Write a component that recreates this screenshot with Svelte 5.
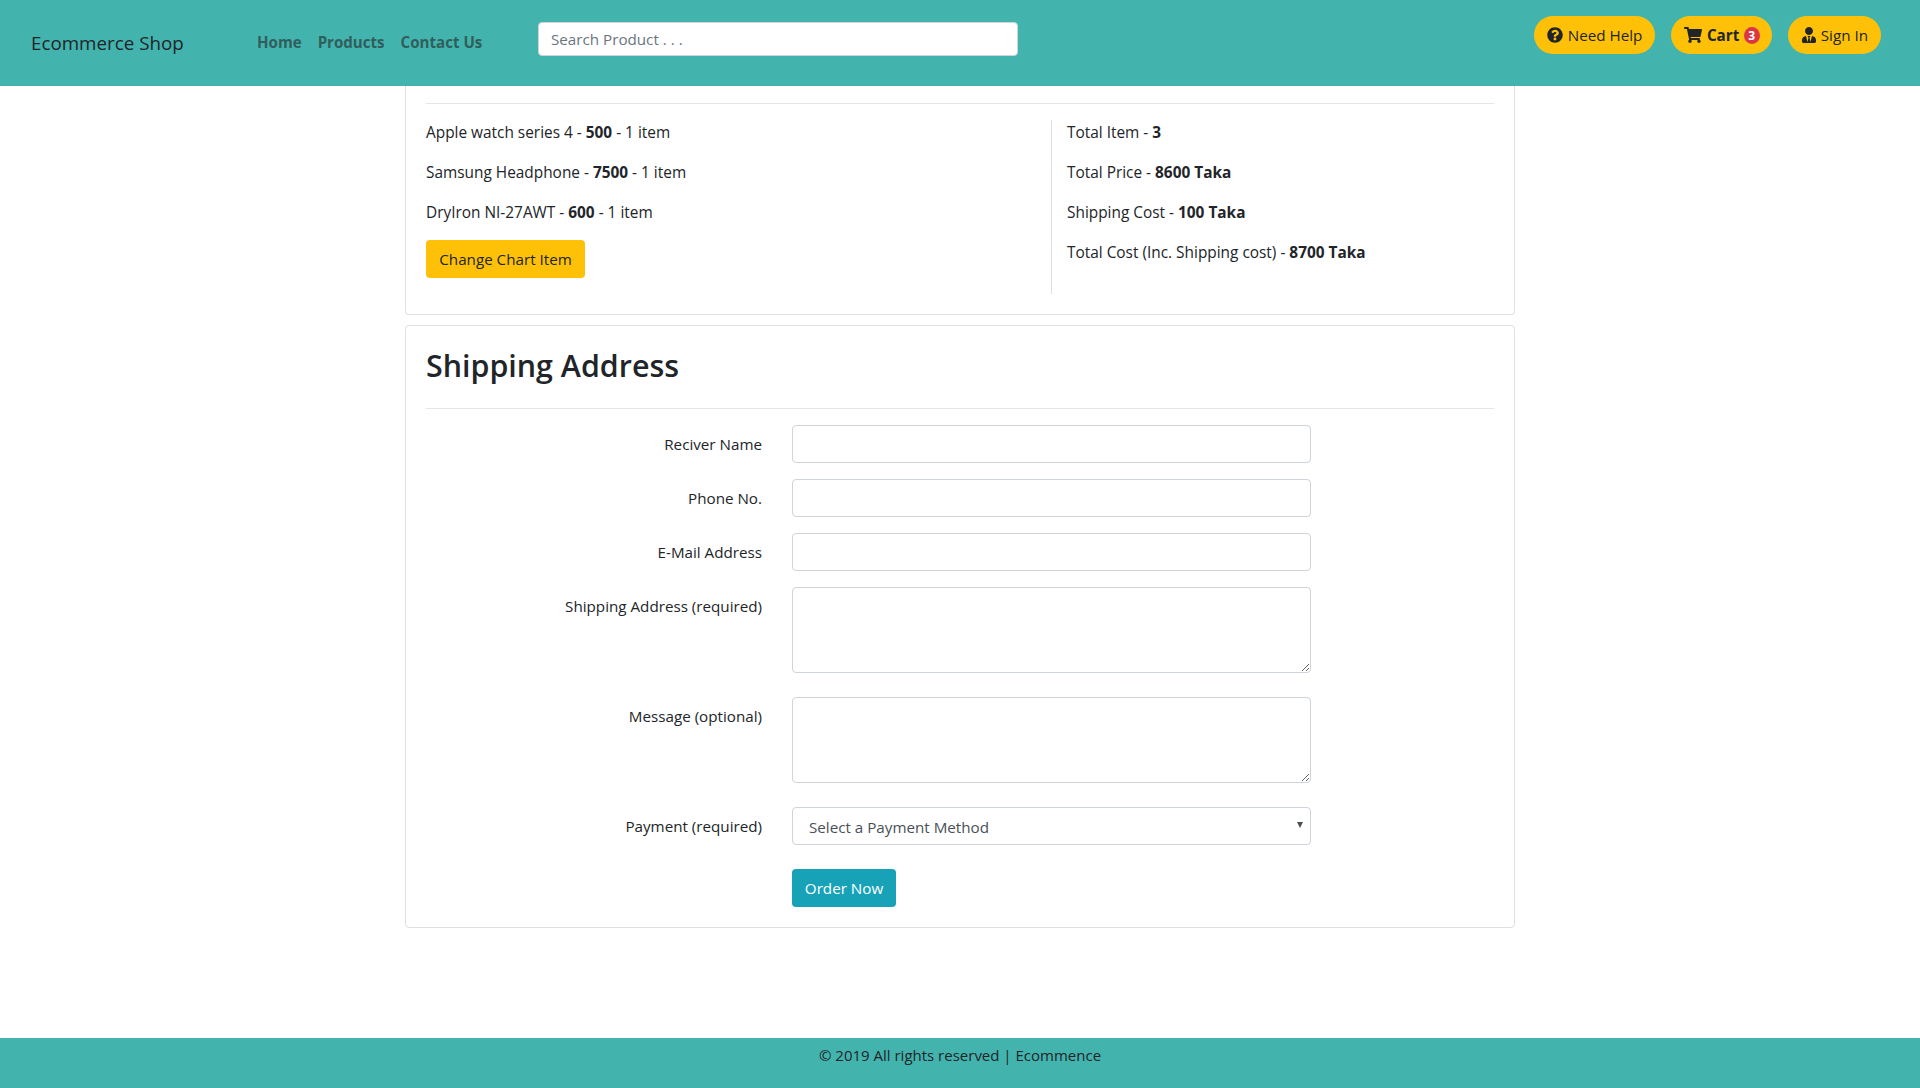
<script>
  let orderItems = [
    { name: 'Apple watch series 4', price: 500 },
    { name: 'Samsung Headphone', price: 7500 },
    { name: 'DryIron NI-27AWT', price: 600 }
  ];
  let totals = [
    { label: 'Total Item', value: '3' },
    { label: 'Total Price', value: '8600 Taka' },
    { label: 'Shipping Cost', value: '100 Taka' },
    { label: 'Total Cost (Inc. Shipping cost)', value: '8700 Taka' }
  ];
</script>

<div class="page">
  <header class="navbar">
    <a class="brand" href="#top">Ecommerce Shop</a>
    <nav class="links">
      <a href="#top">Home</a>
      <a href="#top">Products</a>
      <a href="#top">Contact Us</a>
    </nav>
    <input class="search" type="text" placeholder="Search Product . . ." />
    <div class="actions">
      <a class="pill" href="#top">
        <svg viewBox="0 0 512 512" width="16" height="16"><path d="M504 256c0 136.997-111.043 248-248 248S8 392.997 8 256C8 119.083 119.043 8 256 8s248 111.083 248 248zM262.655 90c-54.497 0-89.255 22.957-116.549 63.758-3.536 5.286-2.353 12.415 2.715 16.258l34.699 26.31c5.205 3.947 12.621 3.008 16.665-2.122 17.864-22.658 30.113-35.797 57.303-35.797 20.429 0 45.698 13.148 45.698 32.958 0 14.976-12.363 22.667-32.534 33.976C247.128 238.528 216 254.941 216 296v4c0 6.627 5.373 12 12 12h56c6.627 0 12-5.373 12-12v-1.333c0-28.462 83.186-29.647 83.186-106.667 0-58.002-60.165-102-116.531-102zM256 338c-25.365 0-46 20.635-46 46 0 25.364 20.635 46 46 46s46-20.636 46-46c0-25.365-20.635-46-46-46z"/></svg>
        Need Help
      </a>
      <a class="pill cart" href="#top">
        <svg viewBox="0 0 576 512" width="18" height="16"><path d="M528.12 301.319l47.273-208C578.806 78.301 567.391 64 551.99 64H159.208l-9.166-44.81C147.758 8.021 137.93 0 126.529 0H24C10.745 0 0 10.745 0 24v16c0 13.255 10.745 24 24 24h69.883l70.248 343.435C147.325 417.1 136 435.222 136 456c0 30.928 25.072 56 56 56s56-25.072 56-56c0-15.674-6.447-29.835-16.824-40h209.647C430.447 426.165 424 440.326 424 456c0 30.928 25.072 56 56 56s56-25.072 56-56c0-22.172-12.888-41.332-31.579-50.405l5.517-24.276c3.413-15.018-8.002-29.319-23.403-29.319H218.117l-6.545-32h293.145c11.206 0 20.92-7.754 23.403-18.681z"/></svg>
        <b>Cart</b>
        <span class="badge">3</span>
      </a>
      <a class="pill signin" href="#top">
        <svg viewBox="0 0 448 512" width="14" height="16"><path d="M224 256c70.7 0 128-57.3 128-128S294.7 0 224 0 96 57.3 96 128s57.3 128 128 128zm95.8 32.6L272 480l-32-136 32-56h-96l32 56-32 136-47.8-191.4C56.9 292 0 350.3 0 422.4V464c0 26.5 21.5 48 48 48h352c26.5 0 48-21.5 48-48v-41.6c0-72.1-56.9-130.4-128.2-133.8z"/></svg>
        Sign In
      </a>
    </div>
  </header>

  <main class="container">
    <section class="card summary">
      <hr />
      <div class="summary-row">
        <div class="items">
          {#each orderItems as item}
            <p>{item.name} - <b>{item.price}</b> - 1 item</p>
          {/each}
          <button class="btn btn-warning">Change Chart Item</button>
        </div>
        <div class="totals">
          {#each totals as t}
            <p>{t.label} - <b>{t.value}</b></p>
          {/each}
        </div>
      </div>
    </section>

    <section class="card shipping">
      <h2>Shipping Address</h2>
      <hr />
      <form class="form" on:submit|preventDefault>
        <label for="name">Reciver Name</label>
        <input id="name" class="control" type="text" />
        <label for="phone">Phone No.</label>
        <input id="phone" class="control" type="text" />
        <label for="email">E-Mail Address</label>
        <input id="email" class="control" type="text" />
        <label for="address">Shipping Address (required)</label>
        <textarea id="address" class="control area"></textarea>
        <label for="message">Message (optional)</label>
        <textarea id="message" class="control area"></textarea>
        <label for="payment">Payment (required)</label>
        <div class="select-wrap">
          <select id="payment" class="control select">
            <option>Select a Payment Method</option>
          </select>
          <span class="arrow"></span>
        </div>
        <span></span>
        <div><button class="btn btn-info">Order Now</button></div>
      </form>
    </section>
  </main>

  <footer class="footer">© 2019 All rights reserved | Ecommence</footer>
</div>

<style>
  :global(body) {
    margin: 0;
    background: #fff;
    color: #212529;
    font-family: "Open Sans", "Liberation Sans", sans-serif;
    font-size: 15.2px;
    line-height: 24px;
  }
  * {
    box-sizing: border-box;
  }
  .page {
    height: 1088px;
    display: flex;
    flex-direction: column;
  }
  .navbar {
    height: 86px;
    flex: none;
    background: #43b3ae;
    display: flex;
    padding: 16px 39px 0 31px;
  }
  .brand {
    font-size: 18.8px;
    line-height: 54px;
    height: 54px;
    color: #212529;
    text-decoration: none;
    width: 226px;
  }
  .links {
    display: flex;
    gap: 16px;
    width: 281px;
    padding-top: 13px;
  }
  .links a {
    font-weight: 700;
    font-size: 15.1px;
    color: #2f5f5c;
    text-decoration: none;
    line-height: 26px;
  }
  .search {
    width: 480px;
    height: 34px;
    margin-top: 6px;
    padding: 0 12px;
    border: 1px solid #ced4da;
    border-radius: 4px;
    font: inherit;
    color: #495057;
  }
  .search::placeholder {
    color: #6c757d;
  }
  .actions {
    margin-left: auto;
    display: flex;
    gap: 16px;
  }
  .pill {
    height: 38px;
    padding: 0 13px;
    border-radius: 19px;
    background: #ffc107;
    color: #212529;
    display: flex;
    align-items: center;
    gap: 5px;
    text-decoration: none;
  }
  .pill svg {
    fill: #212529;
    flex: none;
  }
  .cart {
    padding-right: 12px;
    gap: 4.5px;
  }
  .signin {
    padding-left: 14px;
  }
  .badge {
    width: 16px;
    height: 17px;
    border-radius: 50%;
    background: #dc3545;
    color: #fff;
    font-size: 12px;
    font-weight: 700;
    line-height: 17px;
    text-align: center;
  }
  .container {
    width: 1110px;
    margin-left: 405px;
    flex: 1;
  }
  .card {
    border: 1px solid rgba(0, 0, 0, 0.125);
    border-radius: 4px;
    padding: 0 20px;
  }
  .summary {
    border-top: none;
    border-radius: 0 0 4px 4px;
    height: 229px;
    padding-top: 17px;
    margin-bottom: 10px;
  }
  .shipping {
    height: 603px;
  }
  hr {
    border: none;
    border-top: 1px solid rgba(0, 0, 0, 0.1);
    margin: 0;
  }
  .summary-row {
    display: grid;
    grid-template-columns: 625px 1fr;
    margin-top: 16px;
  }
  p {
    margin: 0 0 15px;
    padding-top: 1px;
    font-size: 15.4px;
  }
  b {
    font-weight: 700;
  }
  .totals {
    border-left: 1px solid rgba(0, 0, 0, 0.125);
    padding-left: 15px;
    height: 174px;
  }
  .btn {
    height: 38px;
    padding: 0;
    border: 1px solid transparent;
    border-radius: 4px;
    font: inherit;
    white-space: nowrap;
    cursor: pointer;
  }
  .btn-warning {
    background: #ffc107;
    color: #212529;
    width: 159px;
  }
  .btn-info {
    background: #17a2b8;
    color: #fff;
    width: 104px;
  }
  h2 {
    margin: 0;
    font-size: 30.4px;
    font-weight: 600;
    line-height: 38px;
    padding: 21px 0 23px;
  }
  .form {
    display: grid;
    grid-template-columns: 336px 519px;
    column-gap: 30px;
    margin-top: 16px;
    row-gap: 16px;
  }
  label {
    text-align: right;
    padding-top: 7px;
  }
  .control {
    display: block;
    width: 100%;
    height: 38px;
    padding: 6px 12px;
    background: #fff;
    border: 1px solid #ced4da;
    border-radius: 4px;
    font: inherit;
    color: #495057;
  }
  .area {
    height: 86px;
    margin-bottom: 8px;
  }
  .select-wrap {
    position: relative;
    margin-bottom: 8px;
  }
  .select {
    appearance: none;
    padding: 7px 16px 6px;
  }
  .arrow {
    position: absolute;
    left: 505px;
    top: 15px;
    border-left: 3px solid transparent;
    border-right: 3px solid transparent;
    border-top: 6px solid #495057;
  }
  .footer {
    height: 50px;
    flex: none;
    background: #43b3ae;
    text-align: center;
    padding-top: 5px;
    font-size: 15px;
  }
</style>
